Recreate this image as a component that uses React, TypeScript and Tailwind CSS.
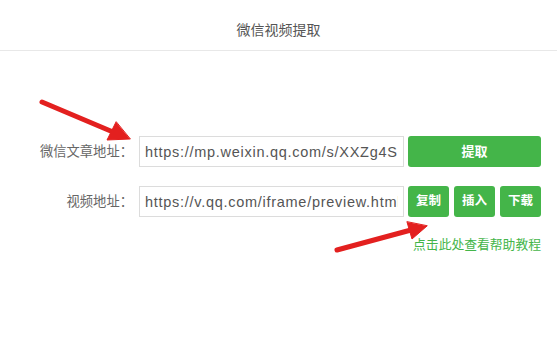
import { useState } from 'react';

const FONT = 'font-["Liberation_Sans","Noto_Sans_CJK_SC",sans-serif]';

// Les deux flèches rouges posées par-dessus la capture
function Arrows() {
  return (
    <svg className="pointer-events-none absolute left-0 top-0" width="557" height="345" viewBox="0 0 557 345">
      <g fill="#e3201f" stroke="#e3201f" strokeLinecap="round">
        <line x1="42" y1="102" x2="113" y2="132" strokeWidth="5" />
        <polygon points="130,139 107,140 116,122" strokeWidth="1" strokeLinejoin="round" />
        <line x1="337" y1="250" x2="411" y2="230" strokeWidth="5" />
        <polygon points="427,226 412,239 407,222" strokeWidth="1" strokeLinejoin="round" />
      </g>
    </svg>
  );
}

export default function App() {
  const [article, setArticle] = useState('https://mp.weixin.qq.com/s/XXZg4SkR2pLqa1');
  const [video, setVideo] = useState('https://v.qq.com/iframe/preview.html?vid=m0');

  return (
    <div className={`relative h-[345px] w-[557px] overflow-hidden bg-white ${FONT}`}>
      <div className="flex h-[51px] items-center justify-center border-b border-[#e8e8e8] pt-[10px] text-[14px] text-[#555]">
        微信视频提取
      </div>

      <div className="pt-[85px]">
        <div className="flex items-center">
          <label className="w-[133px] text-right text-[13.3px] text-[#666]">微信文章地址：</label>
          <input
            value={article}
            onChange={e => setArticle(e.target.value)}
            className="ml-[6px] h-[31px] w-[265px] border border-[#dcdcdc] px-[5px] text-[14.5px] tracking-[0.72px] text-[#555] outline-none"
          />
          <button className="ml-[4px] h-[31px] w-[133px] rounded-[3px] bg-[#44b549] text-[13px] font-bold text-white">
            提取
          </button>
        </div>

        <div className="mt-[19px] flex items-center">
          <label className="w-[133px] text-right text-[13.3px] text-[#666]">视频地址：</label>
          <input
            value={video}
            onChange={e => setVideo(e.target.value)}
            className="ml-[6px] h-[31px] w-[265px] border border-[#dcdcdc] px-[5px] text-[14.5px] tracking-[0.72px] text-[#555] outline-none"
          />
          <div className="ml-[4px] flex gap-[5px]">
            {['复制', '插入', '下载'].map(label => (
              <button key={label} className="h-[31px] w-[41px] rounded-[3px] bg-[#44b549] text-[12.5px] font-bold text-white">
                {label}
              </button>
            ))}
          </div>
        </div>

        <div className="mt-[19px] flex w-[541px] justify-end">
          <a className="cursor-pointer text-[12.8px] leading-[18px] text-[#44b549]">点击此处查看帮助教程</a>
        </div>
      </div>

      <Arrows />
    </div>
  );
}
